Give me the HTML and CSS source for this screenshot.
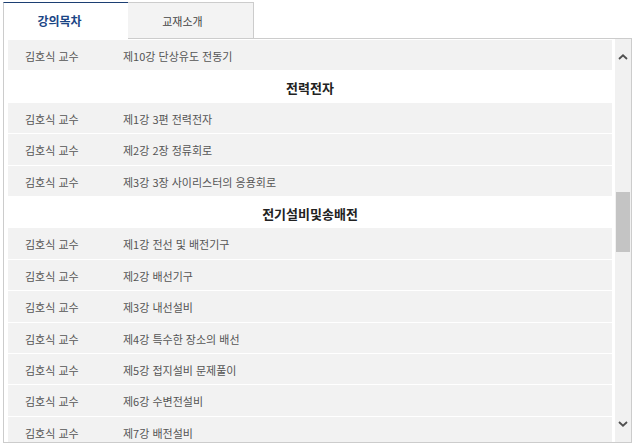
FILE: index.html
```html
<!DOCTYPE html>
<html lang="ko">
<head>
    <meta charset="UTF-8">
    <title>강의목차</title>
    <link rel="stylesheet" href="styles.css">
</head>
<body>
<div class="wrap">
    <!-- 탭 -->
    <ul class="tabs">
        <li class="on">강의목차</li>
        <li>교재소개</li>
        <li class="fill"></li>
    </ul>

    <div class="panel">
        <div class="list">
            <div class="row"><span class="prof">김호식 교수</span><span>제10강 단상유도 전동기</span></div>
            <div class="head">전력전자</div>
            <div class="row"><span class="prof">김호식 교수</span><span>제1강 3편 전력전자</span></div>
            <div class="row"><span class="prof">김호식 교수</span><span>제2강 2장 정류회로</span></div>
            <div class="row"><span class="prof">김호식 교수</span><span>제3강 3장 사이리스터의 응용회로</span></div>
            <div class="head">전기설비및송배전</div>
            <div class="row"><span class="prof">김호식 교수</span><span>제1강 전선 및 배전기구</span></div>
            <div class="row"><span class="prof">김호식 교수</span><span>제2강 배선기구</span></div>
            <div class="row"><span class="prof">김호식 교수</span><span>제3강 내선설비</span></div>
            <div class="row"><span class="prof">김호식 교수</span><span>제4강 특수한 장소의 배선</span></div>
            <div class="row"><span class="prof">김호식 교수</span><span>제5강 접지설비 문제풀이</span></div>
            <div class="row"><span class="prof">김호식 교수</span><span>제6강 수변전설비</span></div>
            <div class="row"><span class="prof">김호식 교수</span><span>제7강 배전설비</span></div>
        </div>

        <!-- 스크롤바 -->
        <div class="scrollbar">
            <span class="btn"><svg width="10" height="6" viewBox="0 0 10 6"><path d="M1 5L5 1.3L9 5" fill="none" stroke="#505050" stroke-width="1.8"/></svg></span>
            <div class="track"><div class="thumb"></div></div>
            <span class="btn"><svg width="10" height="6" viewBox="0 0 10 6"><path d="M1 1L5 4.7L9 1" fill="none" stroke="#505050" stroke-width="1.8"/></svg></span>
        </div>
    </div>
</div>
</body>
</html>
```

FILE: styles.css
```css
* {
    margin: 0;
    padding: 0
}

ul {
    list-style: none
}

body {
    font-family: "Noto Sans CJK KR", "Noto Sans", sans-serif;
    background: #fff;
    color: #555;
}

.wrap {
    width: 629px;
    margin: 2px 0 0 3px;
}

.tabs {
    display: flex;
    height: 37px;
}

.tabs li {
    box-sizing: border-box;
    width: 126px;
    padding-right: 16px;
    text-align: center;
    line-height: 36px;
    font-size: 11px;
    color: #444;
    background: #f3f3f3;
    border: 1px solid #ccc;
    border-left: none;
}

.tabs li.on {
    width: 125px;
    padding-right: 13px;
    background: #fff;
    color: #1a4585;
    font-weight: bold;
    font-size: 12px;
    border-left: 1px solid #ccc;
    border-right: none;
    border-top: 1px solid #1c3f73;
    border-bottom: none;
}

.tabs li.fill {
    flex: 1;
    padding: 0;
    background: #fff;
    border: none;
    border-bottom: 1px solid #ccc;
}

.panel {
    display: flex;
    height: 403px;
    border: 1px solid #ccc;
    border-top: none;
}

.list {
    flex: 1;
    overflow: hidden;
    padding: 1px 3px 0 4px;
}

.row {
    display: flex;
    height: 30.4px;
    line-height: 33px;
    padding-left: 17px;
    background: #f2f2f2;
    border-bottom: 1px solid #fff;
    font-size: 11px;
    color: #555;
}

.prof {
    width: 98px;
}

.head {
    height: 30.4px;
    line-height: 33px;
    border-bottom: 1px solid #fff;
    text-align: center;
    font-size: 13px;
    font-weight: bold;
    color: #222;
}

.scrollbar {
    width: 16px;
    background: #f1f1f1;
    display: flex;
    flex-direction: column;
}

.btn {
    height: 36px;
    display: flex;
    align-items: center;
    justify-content: center;
}

.track {
    flex: 1;
}

.thumb {
    margin: 117px 1px 0 1px;
    height: 60px;
    background: #c4c4c4;
}
```
